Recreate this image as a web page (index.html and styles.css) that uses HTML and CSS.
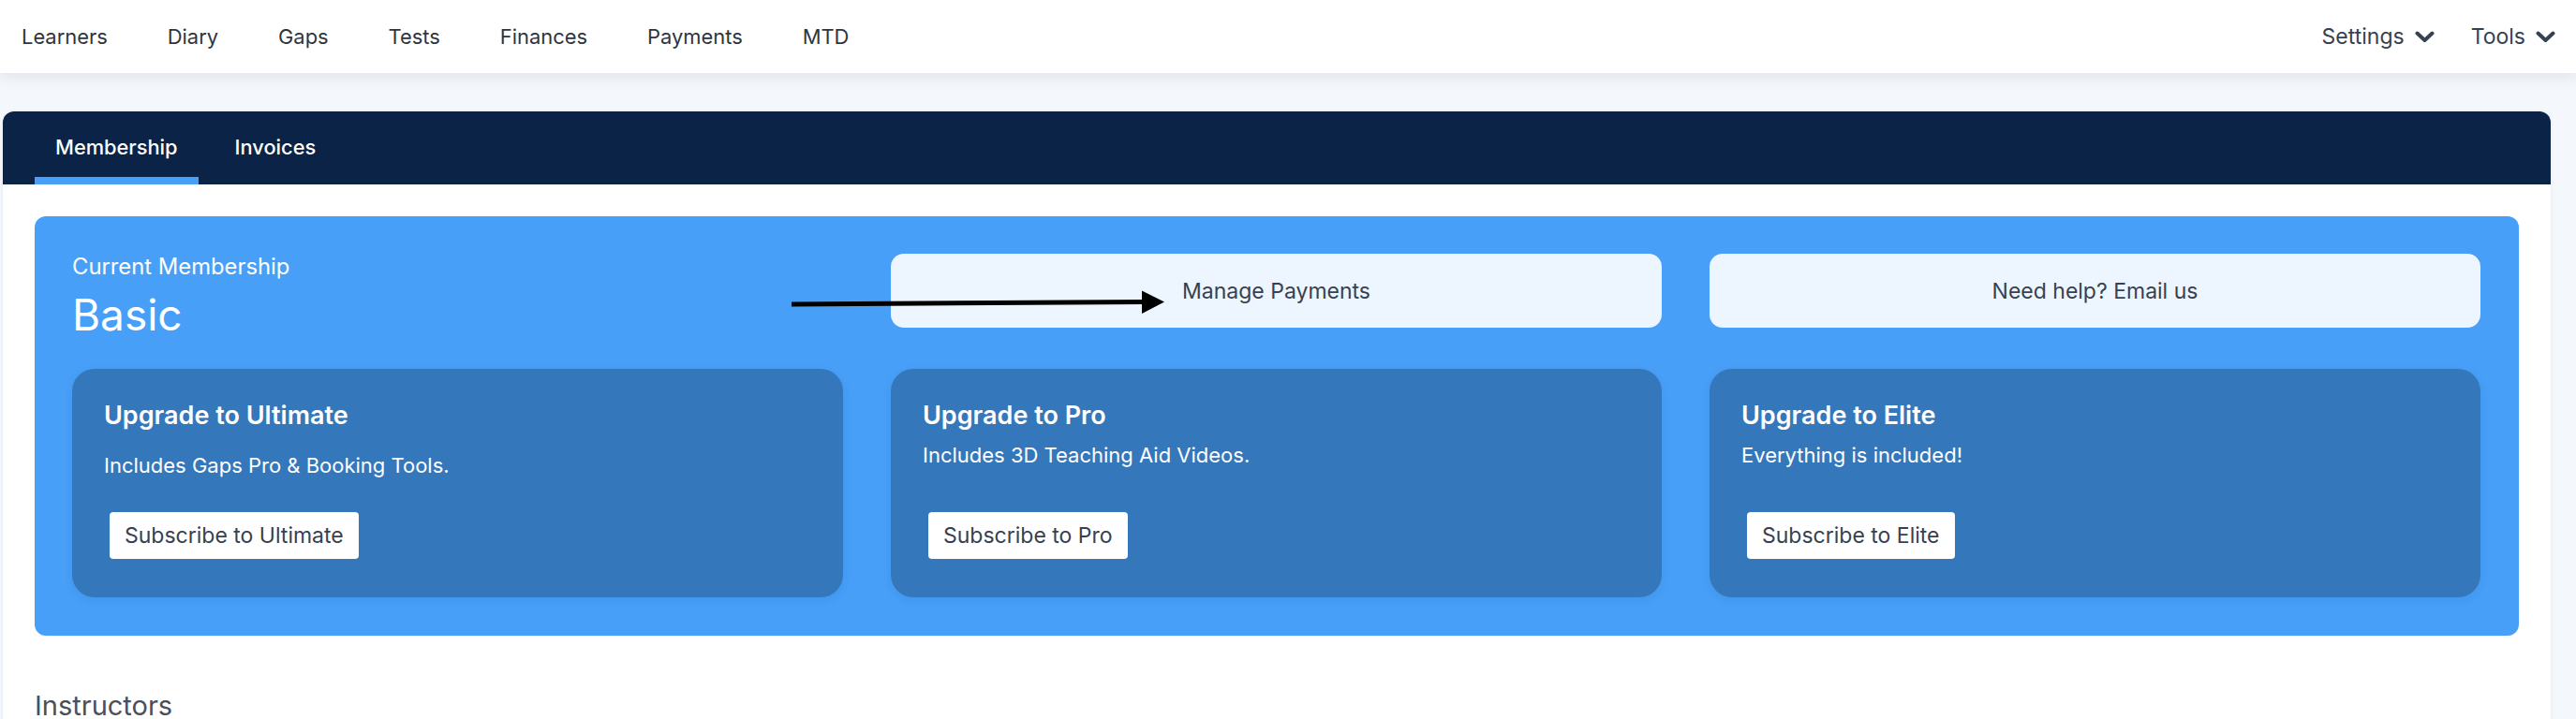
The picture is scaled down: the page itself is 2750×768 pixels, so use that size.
FILE: index.html
```html
<!DOCTYPE html>
<html lang="en">
<head>
    <meta charset="UTF-8">
    <meta name="viewport" content="width=device-width, initial-scale=1.0">
    <title>Membership</title>
    <link rel="stylesheet" href="styles.css">
</head>
<body>
    <nav class="topbar">
        <div class="nav-links">
            <a href="#">Learners</a>
            <a href="#">Diary</a>
            <a href="#">Gaps</a>
            <a href="#">Tests</a>
            <a href="#">Finances</a>
            <a href="#">Payments</a>
            <a href="#">MTD</a>
        </div>
        <div class="nav-menus">
            <a href="#" class="dropdown">Settings
                <svg width="21" height="13" viewBox="0 0 21 13"><polyline points="2.5,2.5 10.5,10 18.5,2.5" /></svg>
            </a>
            <a href="#" class="dropdown">Tools
                <svg width="21" height="13" viewBox="0 0 21 13"><polyline points="2.5,2.5 10.5,10 18.5,2.5" /></svg>
            </a>
        </div>
    </nav>

    <main class="page">
        <div class="card">
            <div class="tabs">
                <a href="#" class="tab active">Membership</a>
                <a href="#" class="tab">Invoices</a>
            </div>
            <div class="card-body">
                <section class="membership">
                    <div class="current">
                        <div class="current-label">Current Membership</div>
                        <div class="current-plan">Basic</div>
                    </div>
                    <a href="#" class="panel-btn">Manage Payments</a>
                    <a href="#" class="panel-btn">Need help? Email us</a>

                    <div class="plan">
                        <h3>Upgrade to Ultimate</h3>
                        <p class="plan-desc spaced">Includes Gaps Pro &amp; Booking Tools.</p>
                        <button class="sub-btn">Subscribe to Ultimate</button>
                    </div>
                    <div class="plan">
                        <h3>Upgrade to Pro</h3>
                        <p class="plan-desc">Includes 3D Teaching Aid Videos.</p>
                        <button class="sub-btn">Subscribe to Pro</button>
                    </div>
                    <div class="plan">
                        <h3>Upgrade to Elite</h3>
                        <p class="plan-desc">Everything is included!</p>
                        <button class="sub-btn">Subscribe to Elite</button>
                    </div>
                </section>

                <h2 class="section-title">Instructors</h2>
            </div>
        </div>
    </main>

    <!-- annotation arrow pointing at Manage Payments -->
    <svg class="pointer" width="410" height="36" viewBox="0 0 410 36">
        <line x1="5" y1="20" x2="382" y2="17.5" />
        <polygon points="379,5.5 403,17.5 379,30" />
    </svg>
</body>
</html>
```

FILE: styles.css
```css
body {
    margin: 0;
    background-color: #f4f7fb;
    font-family: Inter, "Noto Sans", sans-serif;
    color: #374151;
    position: relative;
    overflow: hidden;
}
a {
    text-decoration: none;
    color: inherit;
}
.topbar {
    height: 78px;
    background-color: #fff;
    display: flex;
    align-items: center;
    justify-content: space-between;
    padding: 0 22px 0 23px;
    box-shadow: 0 4px 14px rgba(100, 116, 139, 0.14);
    position: relative;
    z-index: 2;
}
.nav-links {
    display: flex;
    gap: 64px;
    font-size: 21.9px;
    color: #30353d;
}
.nav-menus {
    display: flex;
    gap: 39px;
    font-size: 23px;
    color: #374151;
}
.dropdown {
    display: flex;
    align-items: center;
    gap: 11px;
}
.dropdown svg polyline {
    fill: none;
    stroke: #374151;
    stroke-width: 4;
    stroke-linecap: round;
    stroke-linejoin: round;
}
.page {
    padding: 41px 27px 0 3px;
}
.card {
    background-color: #fff;
    border-radius: 12px 12px 0 0;
    box-shadow: 0 1px 4px rgba(100, 116, 139, 0.12);
}
.tabs {
    height: 78px;
    background-color: #0b2346;
    border-radius: 12px 12px 0 0;
    padding: 0 34px;
    display: flex;
    gap: 17px;
}
.tab {
    display: flex;
    align-items: center;
    padding: 5px 22px 0;
    border-bottom: 8px solid transparent;
    color: #fff;
    font-size: 21.8px;
    font-weight: 500;
}
.tab.active {
    border-bottom-color: #479ff8;
}
.card-body {
    padding: 34px;
    height: 700px;
}
.membership {
    background-color: #479ff8;
    border-radius: 12px;
    padding: 40px 41px 41px 40px;
    display: grid;
    grid-template-columns: repeat(3, 1fr);
    column-gap: 51px;
    row-gap: 34px;
}
.current {
    color: #fff;
}
.current-label {
    font-size: 23.8px;
    line-height: 27.6px;
    margin-bottom: 14px;
}
.current-plan {
    font-size: 46px;
    line-height: 47px;
}
.panel-btn {
    align-self: start;
    height: 79px;
    background-color: #edf5fe;
    border-radius: 14px;
    display: flex;
    align-items: center;
    justify-content: center;
    font-size: 23px;
    color: #374151;
}
.plan {
    background-color: #3577bb;
    border-radius: 24px;
    padding: 34px 34px 41px;
    display: flex;
    flex-direction: column;
    color: #fff;
    box-shadow: 0 3px 10px rgba(15, 40, 80, 0.08);
}
.plan h3 {
    margin: 0;
    font-size: 27px;
    line-height: 31px;
    font-weight: 600;
}
.plan-desc {
    margin: 11px 0 33px;
    font-size: 22px;
    line-height: 33px;
}
.plan-desc.spaced {
    margin-top: 22px;
}
.sub-btn {
    align-self: flex-start;
    margin: auto 0 0 6px;
    padding: 8px 16px;
    background-color: #fff;
    border: none;
    border-radius: 4px;
    font-family: inherit;
    font-size: 23px;
    line-height: 34.5px;
    color: #374151;
    cursor: pointer;
}
.section-title {
    margin: 57px 0 0;
    font-size: 29px;
    font-weight: 400;
    color: #4b5058;
}
.pointer {
    position: absolute;
    left: 840px;
    top: 305px;
    z-index: 3;
}
.pointer line {
    stroke: #000;
    stroke-width: 5;
}
.pointer polygon {
    fill: #000;
}
```
